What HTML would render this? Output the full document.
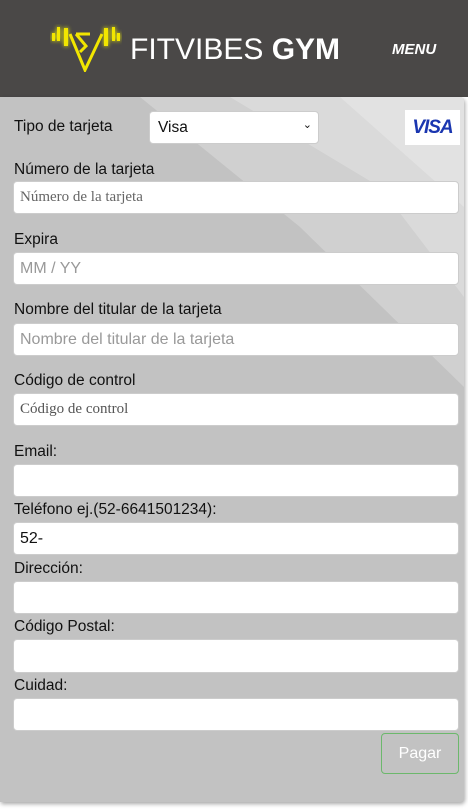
<!DOCTYPE html>
<html><head><meta charset="utf-8"><style>
*{box-sizing:border-box;margin:0;padding:0}
body{width:468px;height:810px;background:#fff;font-family:"Liberation Sans",sans-serif;position:relative;overflow:hidden}
.hdr{position:absolute;left:0;top:0;width:468px;height:97px;background:#4a4847}
.panel{position:absolute;left:0;top:97px;width:464px;height:705px;background:#c2c2c2;box-shadow:1px 2px 4px rgba(0,0,0,.35);overflow:hidden;border-radius:0 4px 4px 0}
.lbl{position:absolute;left:14px;font-size:15.5px;color:#111}
.in{position:absolute;left:13px;width:446px;height:33px;background:#fff;border:1px solid #ccc;border-radius:4px;font-size:15px;color:#999;padding-left:6px;line-height:31px}
</style></head><body>
<div class="hdr">
<svg style="position:absolute;left:50px;top:24px" width="72" height="48" viewBox="0 0 72 48">
<g fill="#f2e600" style="filter:drop-shadow(0 0 2px #ff0)">
<rect x="2" y="9" width="3" height="8"/><rect x="7" y="3" width="3" height="14"/><rect x="14" y="4" width="4" height="18"/>
<rect x="54" y="4" width="4" height="18"/><rect x="62" y="3" width="3" height="14"/><rect x="67" y="9" width="3" height="8"/>
</g>
<path d="M20 10 L35 46 L52 10 M26 10 L40 10 M26 10 L36 22 L30 28" fill="none" stroke="#f2e600" stroke-width="3"/>
</svg>
<div style="position:absolute;left:130px;top:31px;font-size:30px;color:#fff;line-height:38px">FITVIBES <b>GYM</b></div>
<div style="position:absolute;left:392px;top:41px;font-size:15px;color:#fff;font-weight:bold;font-style:italic">MENU</div>
</div>
<div class="panel">
<svg width="464" height="705" style="position:absolute;left:0;top:0">
<polygon points="140,0 464,0 464,290 300,130" fill="#d0d0d0"/>
<polygon points="230,0 464,0 464,200 380,90" fill="#dadada"/>
<polygon points="340,0 464,0 464,110" fill="#e2e2e2"/>
</svg>
</div>
<div class="lbl" style="top:118px">Tipo de tarjeta</div>
<div style="position:absolute;left:149px;top:111px;width:170px;height:33px;background:#fff;border-radius:4px;border:1px solid #ccc;font-size:15.5px;padding:7px 8px;color:#111">Visa<span style="position:absolute;right:6px;top:6px;font-size:11px">&#8964;</span></div>
<div style="position:absolute;left:405px;top:110px;width:55px;height:35px;background:#fff;color:#1a36b0;font-weight:bold;font-style:italic;font-size:19px;text-align:center;line-height:35px;letter-spacing:-1px">VISA</div>
<div class="lbl" style="top:161px">Número de la tarjeta</div>
<div class="in" style="top:181px;font-family:'Liberation Serif',serif;color:#666">Número de la tarjeta</div>
<div class="lbl" style="top:231px">Expira</div>
<div class="in" style="top:252px;font-size:16px">MM / YY</div>
<div class="lbl" style="top:301px">Nombre del titular de la tarjeta</div>
<div class="in" style="top:323px;font-size:16px">Nombre del titular de la tarjeta</div>
<div class="lbl" style="top:372px">Código de control</div>
<div class="in" style="top:393px;font-family:'Liberation Serif',serif;color:#555">Código de control</div>
<div class="lbl" style="top:443px">Email:</div>
<div class="in" style="top:464px"></div>
<div class="lbl" style="top:501px">Teléfono ej.(52-6641501234):</div>
<div class="in" style="top:522px;color:#111;font-size:16px">52-</div>
<div class="lbl" style="top:560px">Dirección:</div>
<div class="in" style="top:581px"></div>
<div class="lbl" style="top:618px">Código Postal:</div>
<div class="in" style="top:639px;height:34px"></div>
<div class="lbl" style="top:677px">Cuidad:</div>
<div class="in" style="top:698px"></div>
<div style="position:absolute;left:381px;top:733px;width:78px;height:41px;border:1px solid #6cb86c;border-radius:4px;color:#fff;font-size:16px;text-align:center;line-height:39px">Pagar</div>
</body></html>
